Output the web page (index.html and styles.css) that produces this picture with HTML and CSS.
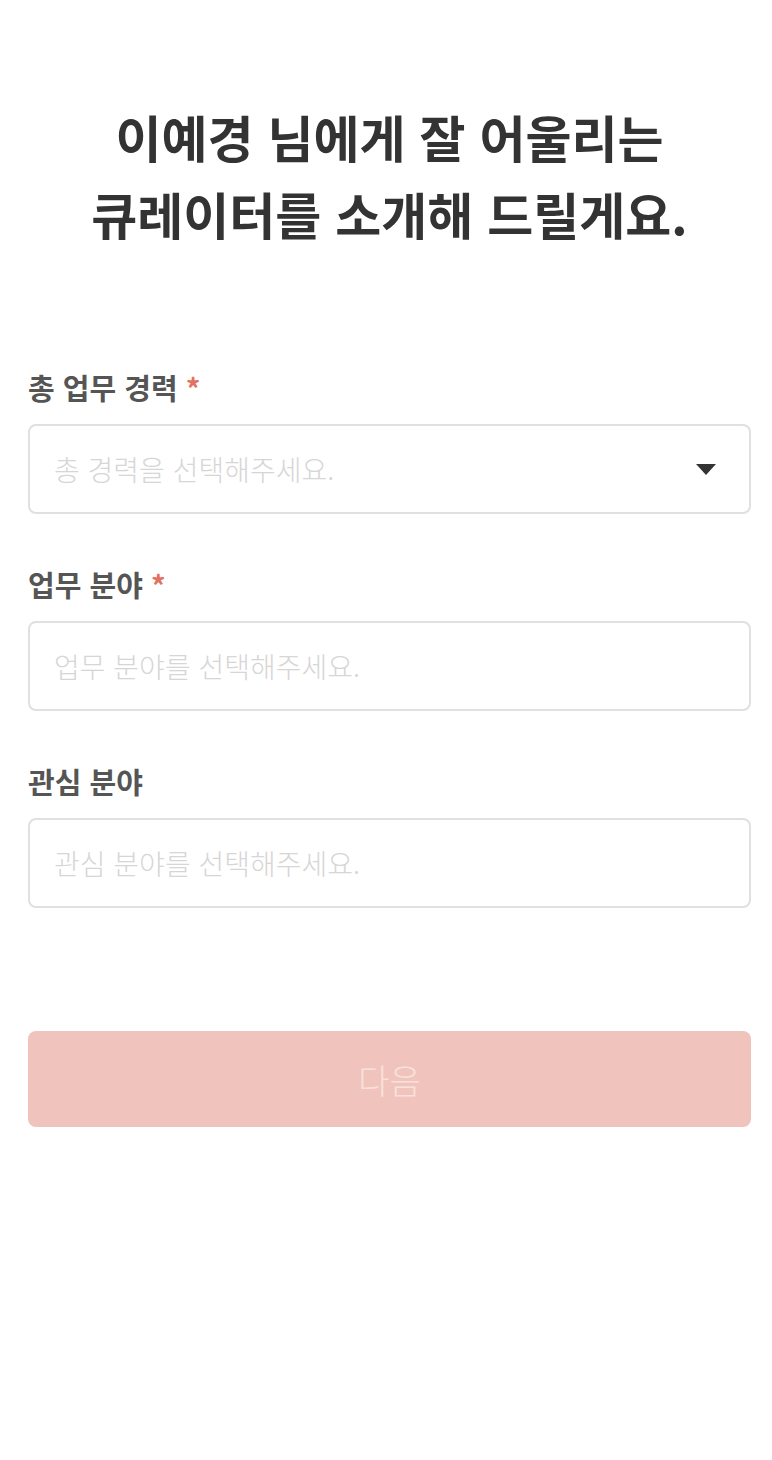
FILE: index.html
```html
<!DOCTYPE html>
<html lang="ko">
<head>
<meta charset="utf-8">
<link rel="stylesheet" href="styles.css">
</head>
<body>
<main class="page">
  <h1 class="title">이예경 님에게 잘 어울리는<br>큐레이터를 소개해 드릴게요.</h1>
  <form class="form">
    <div class="field">
      <div class="label">총 업무 경력 <span class="req">*</span></div>
      <div class="box">
        <span class="ph">총 경력을 선택해주세요.</span>
        <svg class="caret" width="20" height="11" viewBox="0 0 20 11"><path d="M0 0H20L10 11Z" fill="#333"/></svg>
      </div>
    </div>
    <div class="field">
      <div class="label">업무 분야 <span class="req">*</span></div>
      <div class="box"><span class="ph">업무 분야를 선택해주세요.</span></div>
    </div>
    <div class="field">
      <div class="label">관심 분야</div>
      <div class="box"><span class="ph">관심 분야를 선택해주세요.</span></div>
    </div>
    <button type="button" class="next">다음</button>
  </form>
</main>
</body>
</html>
```
FILE: styles.css
```css
* { box-sizing: border-box; }
html, body { margin: 0; padding: 0; background: #fff; }
body { font-family: "Noto Sans CJK KR", "Noto Sans", sans-serif; }
.page { padding: 98px 21px 0 28px; }
.title {
  margin: 0;
  text-align: center;
  font-size: 50px;
  line-height: 77px;
  font-weight: 700;
  color: #333;
}
.form { margin-top: 115px; display: flex; flex-direction: column; }
.field { display: flex; flex-direction: column; gap: 17px; margin-bottom: 50px; }
.field:nth-child(3) { margin-bottom: 123px; }
.label { font-size: 29px; line-height: 40px; font-weight: 700; color: #555; }
.req { color: #e2725f; margin-left: 0; }
.box {
  height: 90px;
  border: 2px solid #e0e0e0;
  border-radius: 8px;
  display: flex;
  align-items: center;
  justify-content: space-between;
  padding: 0 33px 0 24px;
}
.ph { font-size: 28px; color: #d6d6d6; font-weight: 300; }
.caret { display: block; }
.next {
  height: 96px;
  width: 100%;
  border: none;
  border-radius: 8px;
  background: #f0c4bd;
  color: #f8e1dc;
  font-family: inherit;
  font-size: 34px;
  font-weight: 300;
  padding: 0;
}
```
